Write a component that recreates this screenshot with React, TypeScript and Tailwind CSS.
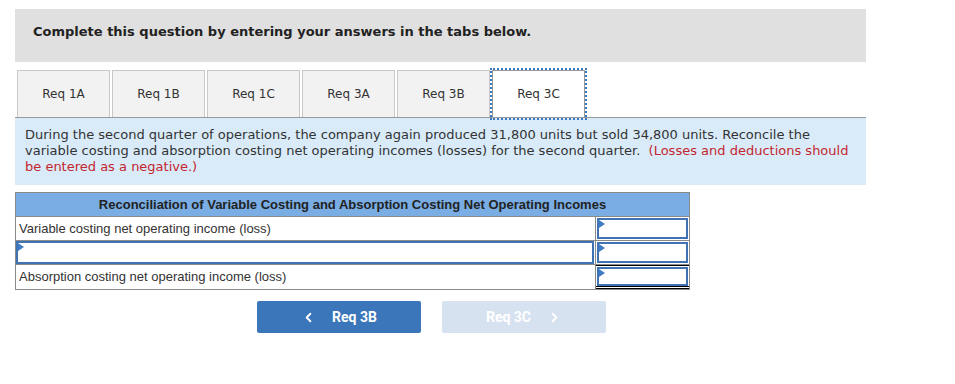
import React from 'react';
import { ChevronLeft, ChevronRight } from 'lucide-react';

const TABS = ['Req 1A', 'Req 1B', 'Req 1C', 'Req 3A', 'Req 3B', 'Req 3C'];
const ACTIVE = 'Req 3C';

const verdana = { fontFamily: '"DejaVu Sans", Verdana, sans-serif' };

const Marker = () => (
  <span className="absolute left-0 top-0 w-0 h-0 border-t-[4px] border-b-[4px] border-l-[6px] border-t-transparent border-b-transparent border-l-[#3f7cc4]" />
);

const InputBox: React.FC<{ className?: string }> = ({ className = '' }) => (
  <div className={`relative h-full w-full border-2 border-[#3f73b3] bg-white ${className}`}>
    <Marker />
  </div>
);

export default function App() {
  return (
    <div className="pl-[15px] pt-[9px] bg-white min-h-[384px] text-[#222]">
      <div
        className="w-[851px] h-[53px] bg-[#e0e0e0] pl-[18px] pt-[13px] text-[13px] font-bold text-[#222]"
        style={verdana}
      >
        Complete this question by entering your answers in the tabs below.
      </div>

      <div className="flex gap-[2px] pl-[2px] mt-[8px] h-[47px]" style={verdana}>
        {TABS.map((t) =>
          t === ACTIVE ? (
            <div
              key={t}
              className="relative z-10 w-[93px] h-[48px] bg-white border border-[#999] outline-2 outline-dotted outline-[#3a78c2] flex items-center justify-center text-[12px] text-[#333]"
            >
              {t}
            </div>
          ) : (
            <div
              key={t}
              className="w-[93px] h-[47px] bg-[#f2f2f2] border border-b-0 border-[#c8c8c8] flex items-center justify-center text-[12px] text-[#333]"
            >
              {t}
            </div>
          )
        )}
      </div>

      <div
        className="w-[851px] h-[68px] border-t border-[#999] bg-[#d9ebf9] pl-[10px] pr-[8px] pt-[9px] text-[13px] leading-[16px] text-[#333]"
        style={verdana}
      >
        During the second quarter of operations, the company again produced 31,800 units but sold 34,800 units. Reconcile the
        variable costing and absorption costing net operating incomes (losses) for the second quarter.&nbsp;{' '}
        <span className="text-[#c4262e]">(Losses and deductions should be entered as a negative.)</span>
      </div>

      <div
        className="mt-[7px] w-[675px] border border-[#8a8a8a] text-[13px] text-[#333]"
        style={{ fontFamily: '"Liberation Sans", Arial, sans-serif' }}
      >
        <div className="h-[23px] bg-[#79ade3] flex items-center justify-center font-bold text-[#222]">
          Reconciliation of Variable Costing and Absorption Costing Net Operating Incomes
        </div>
        <div className="grid grid-cols-[579px_1fr] h-[24px] border-t border-[#8a8a8a]">
          <div className="flex items-center pl-[3px]">Variable costing net operating income (loss)</div>
          <div className="border-l border-[#8a8a8a] p-[1px]">
            <InputBox />
          </div>
        </div>
        <div className="grid grid-cols-[579px_1fr] h-[24px] border-t border-[#8a8a8a]">
          <div className="pr-[1px]">
            <InputBox />
          </div>
          <div className="border-l border-[#8a8a8a] p-[1px]">
            <InputBox />
          </div>
        </div>
        <div className="grid grid-cols-[579px_1fr] h-[25px] border-t border-[#8a8a8a]">
          <div className="flex items-center pl-[3px]">Absorption costing net operating income (loss)</div>
          <div className="border-l border-[#8a8a8a] flex flex-col">
            <div className="h-[1px] bg-black" />
            <div className="flex-1 p-[1px] pb-0">
              <InputBox />
            </div>
            <div className="h-[3px] border-t border-b border-black" />
          </div>
        </div>
      </div>

      <div
        className="flex gap-[21px] ml-[242px] mt-[11px]"
        style={{ fontFamily: 'Roboto, "Liberation Sans", Arial, sans-serif' }}
      >
        <button className="w-[164px] h-[32px] rounded-[2px] bg-[#3a76b9] text-white text-[14px] font-bold flex items-center justify-center gap-[16px]">
          <ChevronLeft size={15} strokeWidth={3} />
          <span>Req 3B</span>
        </button>
        <button className="w-[164px] h-[32px] rounded-[2px] bg-[#d7e2f0] text-white text-[14px] font-bold flex items-center justify-center gap-[16px]">
          <span>Req 3C</span>
          <ChevronRight size={15} strokeWidth={3} />
        </button>
      </div>
    </div>
  );
}
